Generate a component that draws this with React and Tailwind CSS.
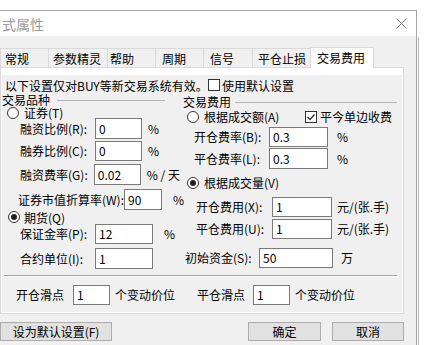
import React from "react";

function Radio({ checked }) {
  return (
    <span className="w-[12px] h-[12px] rounded-full border border-[#333] bg-white flex items-center justify-center shrink-0">
      {checked ? <span className="w-[6px] h-[6px] rounded-full bg-[#222]" /> : null}
    </span>
  );
}

function Check({ checked }) {
  return (
    <span className="w-[12px] h-[12px] border border-[#333] bg-white flex items-center justify-center shrink-0">
      {checked ? (
        <svg width="10" height="10" viewBox="0 0 10 10">
          <polyline points="1.5,5 4,7.5 8.5,2.5" fill="none" stroke="#333" strokeWidth="1.3" />
        </svg>
      ) : null}
    </span>
  );
}

function Box({ w, value }) {
  return (
    <div className={`${w} h-full bg-white border border-[#7a7a7a] flex items-center pl-[3px] text-[12px] leading-none shrink-0`}>
      {value}
    </div>
  );
}

export default function App() {
  return (
    <div className="w-[437px] h-[345px] bg-white overflow-hidden flex font-['Noto_Sans_CJK_SC',sans-serif] text-black text-[12px] leading-none">
      <div className="w-[417px] h-full pt-[10px] flex flex-col shrink-0">
        <div className="flex-1 border-t border-r border-[#a6a6a6] flex flex-col">
          {/* title bar */}
          <div className="h-[25px] bg-white flex items-center justify-between">
            <span className="ml-[2px] text-[14px] text-[#9a9a9a] whitespace-nowrap">式属性</span>
            <svg className="mr-[9px]" width="11" height="11" viewBox="0 0 11 11">
              <path d="M0.5 0.5 L10.5 10.5 M10.5 0.5 L0.5 10.5" stroke="#7a7a7a" strokeWidth="1" fill="none" />
            </svg>
          </div>
          {/* body */}
          <div className="flex-1 bg-[#f0f0f0] flex flex-col">
            <div className="pt-[11px] flex items-end h-[32px]">
              <div className="w-[48px] h-[20px] border-l border-t border-[#d9d9d9] pl-[4px] flex items-center">常规</div>
              <div className="w-[59px] h-[20px] border-l border-t border-[#d9d9d9] pl-[4px] flex items-center">参数精灵</div>
              <div className="w-[48px] h-[20px] border-l border-t border-[#d9d9d9] pl-[2px] flex items-center">帮助</div>
              <div className="w-[48px] h-[20px] border-l border-t border-[#d9d9d9] pl-[6px] flex items-center">周期</div>
              <div className="w-[49px] h-[20px] border-l border-t border-[#d9d9d9] pl-[6px] flex items-center">信号</div>
              <div className="w-[58px] h-[20px] border-l border-t border-[#d9d9d9] pl-[5px] flex items-center">平仓止损</div>
              <div className="relative z-10 w-[64px] h-[21px] border-l border-t border-r border-[#d9d9d9] bg-white pl-[6px] flex items-center">交易费用</div>
            </div>
            {/* panel */}
            <div className="-mt-px w-[404px] h-[247px] border border-[#d9d9d9] bg-white pt-[7px] px-[1px] pb-[1px] flex">
              <div className="flex-1 bg-[#f0f0f0] flex flex-col">
                {/* top line */}
                <div className="h-[19px] pt-[1px] flex items-center">
                  <span className="ml-[3px] w-[203px] whitespace-nowrap leading-[11px]">以下设置仅对BUY等新交易系统有效。</span>
                  <Check checked={false} />
                  <span className="ml-[2px] leading-[11px]">使用默认设置</span>
                </div>
                <div className="flex">
                  {/* left column */}
                  <div className="w-[178px] flex flex-col">
                    <div className="mt-[1px] h-[10px] flex items-center">
                      <span className="w-[48px] leading-[10px]">交易品种</span>
                      <span className="ml-[7px] w-[108px] h-px bg-[#b4b4b4]" />
                    </div>
                    <div className="mt-[2px] h-[11px] flex items-center">
                      <span className="ml-[5px]"><Radio checked={false} /></span>
                      <span className="ml-[5px] leading-[11px]">证券(T)</span>
                    </div>
                    <div className="h-[21px] flex items-center">
                      <span className="ml-[18px] w-[75px] whitespace-nowrap">融资比例(R):</span>
                      <Box w="w-[47px]" value="0" />
                      <span className="ml-[6px]">%</span>
                    </div>
                    <div className="mt-[2px] h-[20px] flex items-center">
                      <span className="ml-[18px] w-[75px] whitespace-nowrap">融券比例(C):</span>
                      <Box w="w-[47px]" value="0" />
                      <span className="ml-[6px]">%</span>
                    </div>
                    <div className="mt-[3px] h-[21px] flex items-center">
                      <span className="ml-[18px] w-[75px] whitespace-nowrap">融资费率(G):</span>
                      <Box w="w-[47px]" value="0.02" />
                      <span className="ml-[6px] whitespace-nowrap">% / 天</span>
                    </div>
                    <div className="mt-[4px] h-[21px] flex items-center">
                      <span className="ml-[16px] w-[112px] whitespace-nowrap">证券市值折算率(W):</span>
                      <Box w="w-[38px]" value="90" />
                      <span className="ml-[11px]">%</span>
                    </div>
                    <div className="mt-[1px] h-[12px] flex items-center">
                      <span className="ml-[6px]"><Radio checked={true} /></span>
                      <span className="ml-[4px] leading-[11px]">期货(Q)</span>
                    </div>
                    <div className="mt-[1px] h-[20px] flex items-center">
                      <span className="ml-[18px] w-[75px] whitespace-nowrap">保证金率(P):</span>
                      <Box w="w-[58px]" value="12" />
                      <span className="ml-[11px]">%</span>
                    </div>
                    <div className="mt-[4px] h-[21px] flex items-center">
                      <span className="ml-[18px] w-[75px] whitespace-nowrap">合约单位(I):</span>
                      <Box w="w-[58px]" value="1" />
                    </div>
                  </div>
                  {/* right column */}
                  <div className="w-[217px] flex flex-col">
                    <div className="mt-[3px] h-[10px] flex items-center">
                      <span className="ml-[3px] w-[48px] leading-[10px]">交易费用</span>
                      <span className="ml-[4px] flex-1 h-px bg-[#b4b4b4]" />
                    </div>
                    <div className="mt-[3px] h-[13px] flex items-center">
                      <span className="ml-[7px]"><Radio checked={false} /></span>
                      <span className="ml-[5px] w-[101px] whitespace-nowrap">根据成交额(A)</span>
                      <Check checked={true} />
                      <span className="ml-[3px] whitespace-nowrap">平今单边收费</span>
                    </div>
                    <div className="mt-[4px] h-[20px] flex items-center">
                      <span className="ml-[14px] w-[75px] whitespace-nowrap">开仓费率(B):</span>
                      <Box w="w-[59px]" value="0.3" />
                      <span className="ml-[9px]">%</span>
                    </div>
                    <div className="mt-[1px] h-[21px] flex items-center">
                      <span className="ml-[14px] w-[75px] whitespace-nowrap">平仓费率(L):</span>
                      <Box w="w-[59px]" value="0.3" />
                      <span className="ml-[9px]">%</span>
                    </div>
                    <div className="mt-[8px] h-[12px] flex items-center">
                      <span className="ml-[7px]"><Radio checked={true} /></span>
                      <span className="ml-[5px] whitespace-nowrap">根据成交量(V)</span>
                    </div>
                    <div className="mt-[8px] h-[20px] flex items-center">
                      <span className="ml-[16px] w-[76px] whitespace-nowrap">开仓费用(X):</span>
                      <Box w="w-[60px]" value="1" />
                      <span className="ml-[5px] whitespace-nowrap">元/(张.手)</span>
                    </div>
                    <div className="mt-[2px] h-[20px] flex items-center">
                      <span className="ml-[16px] w-[76px] whitespace-nowrap">平仓费用(U):</span>
                      <Box w="w-[60px]" value="1" />
                      <span className="ml-[5px] whitespace-nowrap">元/(张.手)</span>
                    </div>
                    <div className="mt-[9px] h-[20px] flex items-center">
                      <span className="ml-[5px] w-[74px] whitespace-nowrap">初始资金(S):</span>
                      <Box w="w-[74px]" value="50" />
                      <span className="ml-[8px]">万</span>
                    </div>
                  </div>
                </div>
                {/* separator */}
                <div className="mt-[6px] ml-[2px] w-[393px] h-[2px] border-t border-[#a0a0a0] border-b border-b-white" />
                {/* slip row */}
                <div className="mt-[8px] h-[20px] flex">
                  <div className="w-[178px] h-full flex items-center">
                    <span className="ml-[14px] w-[57px] whitespace-nowrap">开仓滑点</span>
                    <Box w="w-[37px]" value="1" />
                    <span className="ml-[5px] whitespace-nowrap">个变动价位</span>
                  </div>
                  <div className="h-full flex items-center">
                    <span className="ml-[17px] w-[56px] whitespace-nowrap">平仓滑点</span>
                    <Box w="w-[37px]" value="1" />
                    <span className="ml-[5px] whitespace-nowrap">个变动价位</span>
                  </div>
                </div>
              </div>
            </div>
            {/* buttons */}
            <div className="mt-[8px] h-[19px] flex">
              <div className="w-[112px] h-full bg-[#e1e1e1] border border-[#adadad] flex items-center justify-center">设为默认设置(F)</div>
              <div className="ml-[136px] w-[73px] h-full bg-[#e1e1e1] border border-[#adadad] flex items-center justify-center">确定</div>
              <div className="ml-[11px] w-[72px] h-full bg-[#e1e1e1] border border-[#adadad] flex items-center justify-center">取消</div>
            </div>
          </div>
        </div>
      </div>
      <div className="ml-[1px] mt-[37px] w-px h-[308px] bg-[#b8b8b8]" />
    </div>
  );
}
